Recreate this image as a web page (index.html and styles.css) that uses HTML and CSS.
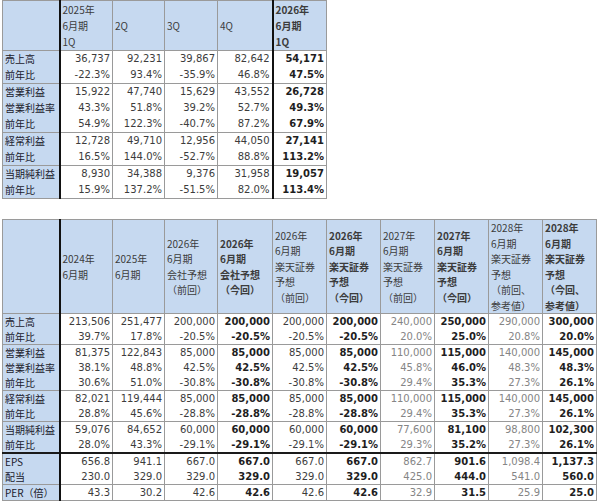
FILE: index.html
```html
<!DOCTYPE html>
<html lang="ja">
<head>
<meta charset="utf-8">
<link rel="stylesheet" href="styles.css">
</head>
<body>
<div class="page">
<table class="tbl top">
<colgroup><col class="c-lab"><col class="c53"><col class="c52"><col class="c53"><col class="c55"><col class="c54"></colgroup>
<tr class="hd">
<td class="lab"></td>
<td>2025年<br>6月期<br>1Q</td>
<td>2Q</td>
<td>3Q</td>
<td>4Q</td>
<td class="tk b">2026年<br>6月期<br>1Q</td>
</tr>
<tr class="gs"><td class="lab">売上高</td><td>36,737</td><td>92,231</td><td>39,867</td><td>82,642</td><td class="tk b">54,171</td></tr>
<tr><td class="lab">前年比</td><td>-22.3%</td><td>93.4%</td><td>-35.9%</td><td>46.8%</td><td class="tk b">47.5%</td></tr>
<tr class="gs"><td class="lab">営業利益</td><td>15,922</td><td>47,740</td><td>15,629</td><td>43,552</td><td class="tk b">26,728</td></tr>
<tr><td class="lab">営業利益率</td><td>43.3%</td><td>51.8%</td><td>39.2%</td><td>52.7%</td><td class="tk b">49.3%</td></tr>
<tr><td class="lab">前年比</td><td>54.9%</td><td>122.3%</td><td>-40.7%</td><td>87.2%</td><td class="tk b">67.9%</td></tr>
<tr class="gs"><td class="lab">経常利益</td><td>12,728</td><td>49,710</td><td>12,956</td><td>44,050</td><td class="tk b">27,141</td></tr>
<tr><td class="lab">前年比</td><td>16.5%</td><td>144.0%</td><td>-52.7%</td><td>88.8%</td><td class="tk b">113.2%</td></tr>
<tr class="gs"><td class="lab">当期純利益</td><td>8,930</td><td>34,388</td><td>9,376</td><td>31,958</td><td class="tk b">19,057</td></tr>
<tr><td class="lab">前年比</td><td>15.9%</td><td>137.2%</td><td>-51.5%</td><td>82.0%</td><td class="tk b">113.4%</td></tr>
</table>

<table class="tbl bot">
<colgroup><col class="c-lab"><col class="c53"><col class="c52"><col class="c53"><col class="c55"><col class="c54"><col class="c54"><col class="c54"><col class="c54"><col class="c54"><col class="c54"></colgroup>
<tr class="hd">
<td class="lab"></td>
<td>2024年<br>6月期</td>
<td>2025年<br>6月期</td>
<td>2026年<br>6月期<br>会社予想<br>（前回）</td>
<td class="b">2026年<br>6月期<br>会社予想<br>（今回）</td>
<td>2026年<br>6月期<br>楽天証券<br>予想<br>（前回）</td>
<td class="b">2026年<br>6月期<br>楽天証券<br>予想<br>（今回）</td>
<td class="lt">2027年<br>6月期<br>楽天証券<br>予想<br>（前回）</td>
<td class="b">2027年<br>6月期<br>楽天証券<br>予想<br>（今回）</td>
<td class="lt">2028年<br>6月期<br>楽天証券<br>予想<br>（前回、<br>参考値）</td>
<td class="b">2028年<br>6月期<br>楽天証券<br>予想<br>（今回、<br>参考値）</td>
</tr>
<tr class="gs"><td class="lab">売上高</td><td>213,506</td><td>251,477</td><td>200,000</td><td class="b">200,000</td><td>200,000</td><td class="b">200,000</td><td class="lt">240,000</td><td class="b">250,000</td><td class="lt">290,000</td><td class="b">300,000</td></tr>
<tr><td class="lab">前年比</td><td>39.7%</td><td>17.8%</td><td>-20.5%</td><td class="b">-20.5%</td><td>-20.5%</td><td class="b">-20.5%</td><td class="lt">20.0%</td><td class="b">25.0%</td><td class="lt">20.8%</td><td class="b">20.0%</td></tr>
<tr class="gs"><td class="lab">営業利益</td><td>81,375</td><td>122,843</td><td>85,000</td><td class="b">85,000</td><td>85,000</td><td class="b">85,000</td><td class="lt">110,000</td><td class="b">115,000</td><td class="lt">140,000</td><td class="b">145,000</td></tr>
<tr><td class="lab">営業利益率</td><td>38.1%</td><td>48.8%</td><td>42.5%</td><td class="b">42.5%</td><td>42.5%</td><td class="b">42.5%</td><td class="lt">45.8%</td><td class="b">46.0%</td><td class="lt">48.3%</td><td class="b">48.3%</td></tr>
<tr><td class="lab">前年比</td><td>30.6%</td><td>51.0%</td><td>-30.8%</td><td class="b">-30.8%</td><td>-30.8%</td><td class="b">-30.8%</td><td class="lt">29.4%</td><td class="b">35.3%</td><td class="lt">27.3%</td><td class="b">26.1%</td></tr>
<tr class="gs"><td class="lab">経常利益</td><td>82,021</td><td>119,444</td><td>85,000</td><td class="b">85,000</td><td>85,000</td><td class="b">85,000</td><td class="lt">110,000</td><td class="b">115,000</td><td class="lt">140,000</td><td class="b">145,000</td></tr>
<tr><td class="lab">前年比</td><td>28.8%</td><td>45.6%</td><td>-28.8%</td><td class="b">-28.8%</td><td>-28.8%</td><td class="b">-28.8%</td><td class="lt">29.4%</td><td class="b">35.3%</td><td class="lt">27.3%</td><td class="b">26.1%</td></tr>
<tr class="gs"><td class="lab">当期純利益</td><td>59,076</td><td>84,652</td><td>60,000</td><td class="b">60,000</td><td>60,000</td><td class="b">60,000</td><td class="lt">77,600</td><td class="b">81,100</td><td class="lt">98,800</td><td class="b">102,300</td></tr>
<tr><td class="lab">前年比</td><td>28.0%</td><td>43.3%</td><td>-29.1%</td><td class="b">-29.1%</td><td>-29.1%</td><td class="b">-29.1%</td><td class="lt">29.3%</td><td class="b">35.2%</td><td class="lt">27.3%</td><td class="b">26.1%</td></tr>
<tr class="thick"><td class="lab">EPS</td><td>656.8</td><td>941.1</td><td>667.0</td><td class="b">667.0</td><td>667.0</td><td class="b">667.0</td><td class="lt">862.7</td><td class="b">901.6</td><td class="lt">1,098.4</td><td class="b">1,137.3</td></tr>
<tr><td class="lab">配当</td><td>230.0</td><td>329.0</td><td>329.0</td><td class="b">329.0</td><td>329.0</td><td class="b">329.0</td><td class="lt">425.0</td><td class="b">444.0</td><td class="lt">541.0</td><td class="b">560.0</td></tr>
<tr class="gs"><td class="lab">PER（倍）</td><td>43.3</td><td>30.2</td><td>42.6</td><td class="b">42.6</td><td>42.6</td><td class="b">42.6</td><td class="lt">32.9</td><td class="b">31.5</td><td class="lt">25.9</td><td class="b">25.0</td></tr>
</table>
</div>
</body>
</html>
```

FILE: styles.css
```css
html, body {
  margin: 0;
  padding: 0;
  background: #ffffff;
}

.page {
  padding: 0 0 0 2px;
  display: flex;
  flex-direction: column;
  align-items: flex-start;
  gap: 20px;
}

.tbl {
  border-collapse: collapse;
  table-layout: fixed;
  font-family: "DejaVu Sans", "Noto Sans CJK JP", sans-serif;
  font-size: 10px;
  color: #3c3c3c;
  border: 1px solid #9a9a9a;
}

.top { width: 324px; }
.bot { width: 594px; }

.c-lab { width: 57px; }
.c52 { width: 52px; }
.c53 { width: 53px; }
.c54 { width: 54px; }
.c55 { width: 55px; }

.tbl td {
  padding: 0 2px 0 2px;
  height: 16px;
  line-height: 16px;
  text-align: right;
  white-space: nowrap;
  overflow: hidden;
  border-left: 1px solid #9a9a9a;
  border-right: 1px solid #9a9a9a;
  border-top: none;
  border-bottom: none;
}

.bot td {
  height: 15px;
  line-height: 15px;
}

.tbl tr.gs td {
  border-top: 1px solid #9a9a9a;
}

.tbl tr.thick td {
  border-top: 2px solid #1a1a1a;
}

.tbl tr.hd td {
  background: #c6d9f0;
  text-align: left;
  vertical-align: middle;
  color: #3c3c3c;
  font-family: "Noto Sans CJK JP", "DejaVu Sans", sans-serif;
}

.top tr.hd td {
  height: 49px;
  line-height: 16px;
}

.bot tr.hd td {
  height: 92px;
  line-height: 15.5px;
}

.tbl td.lab {
  background: #c6d9f0;
  text-align: left;
  color: #20202c;
  font-family: "Noto Sans CJK JP", sans-serif;
  border-right: 2px solid #111111;
}

.tbl td.tk {
  border-left: 2px solid #111111;
}

.tbl td.b {
  font-weight: bold;
  color: #1e1e1e;
}

.tbl td.lt {
  color: #858585;
}
```
